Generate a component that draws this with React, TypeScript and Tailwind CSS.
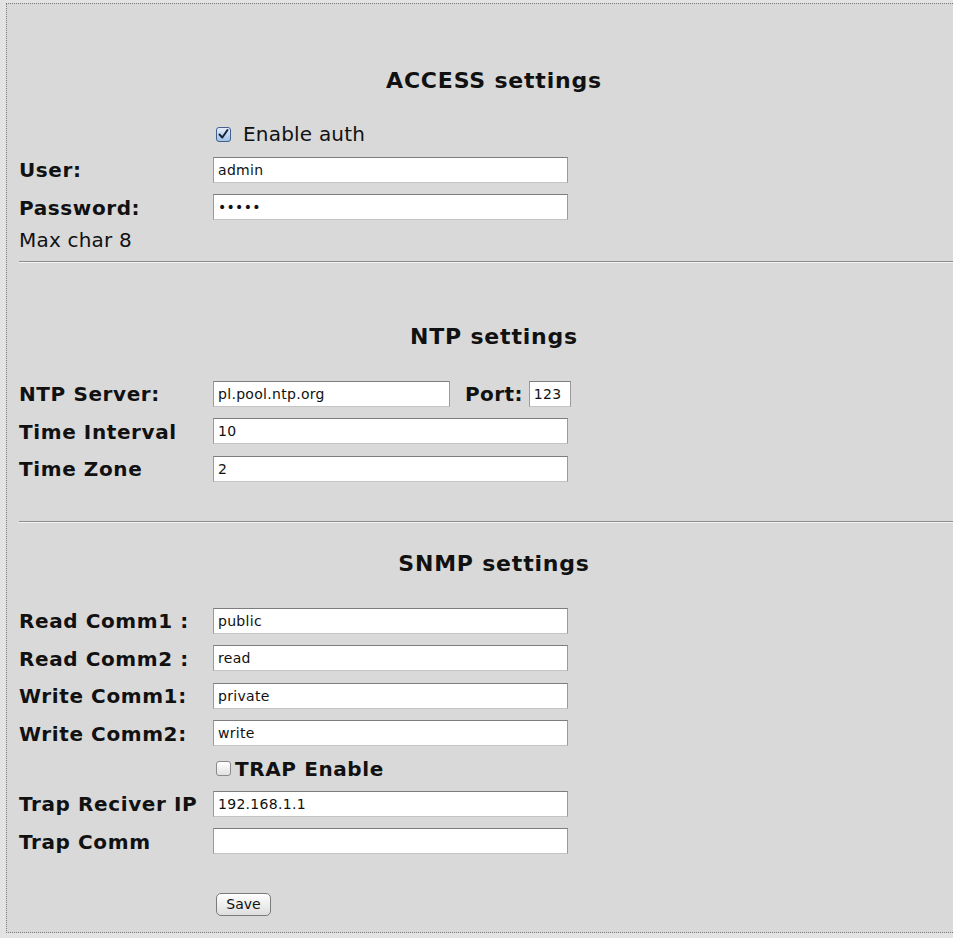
import React from "react";

const font = { fontFamily: '"DejaVu Sans", Verdana, sans-serif' };

function TextBox({ value, w = "w-[355px]" }: { value: string; w?: string }) {
  return (
    <div
      className={`${w} h-[26px] bg-white border border-[#9a9a9a] border-t-[#7d7d7d] border-b-[#c4c4c4] flex items-center pl-[4px] pt-[1px] text-[14px] tracking-[0.3px] text-[#111] overflow-hidden whitespace-nowrap`}
    >
      {value}
    </div>
  );
}

function Row({ label, children }: { label: string; children: React.ReactNode }) {
  return (
    <div className="flex items-center h-[37.5px]">
      <div className="w-[194px] pt-[1px] text-[20px] tracking-[0.6px] font-bold text-[#111] whitespace-nowrap">{label}</div>
      {children}
    </div>
  );
}

function Heading({ children }: { children: React.ReactNode }) {
  return (
    <h2 className="h-[26px] leading-[26px] text-center text-[22px] tracking-[0.8px] font-bold text-[#111]">
      {children}
    </h2>
  );
}

function Divider() {
  return <div className="ml-[12px] h-0 border-t border-t-[#8c8c8c] border-b border-b-[#f4f4f4]" />;
}

export default function App() {
  return (
    <div className="w-[953px] h-[938px] overflow-hidden bg-[#e3e3e3]" style={font}>
      <div className="w-[975px] ml-[6px] mt-[3px] border-l border-t border-b border-dotted border-[#7a7a7a] bg-[#d9d9d9]">
        {/* ACCESS */}
        <div className="pt-[64px]">
          <Heading>ACCESS settings</Heading>
          <div className="mt-[23px] h-[34px] flex items-center pl-[209px]">
            <svg width="15" height="15" viewBox="0 0 15 15" className="mr-[12px]">
              <defs>
                <linearGradient id="cb" x1="0" y1="0" x2="0" y2="1">
                  <stop offset="0" stopColor="#e4eefb" />
                  <stop offset="1" stopColor="#9fbfe6" />
                </linearGradient>
              </defs>
              <rect x="0.5" y="0.5" width="14" height="14" rx="2.5" fill="url(#cb)" stroke="#41628f" />
              <path d="M3.5 7.5 L6.3 10.5 L11.5 3" fill="none" stroke="#15243a" strokeWidth="2" strokeLinecap="round" strokeLinejoin="round" />
            </svg>
            <span className="text-[20px] tracking-[0.2px] text-[#111]">Enable auth</span>
          </div>
          <div className="pl-[12px]">
            <Row label="User:">
              <TextBox value="admin" />
            </Row>
            <Row label="Password:">
              <TextBox value="•••••" />
            </Row>
            <div className="h-[26px] flex items-center pt-[1px] text-[20px] tracking-[0.2px] text-[#111]">Max char 8</div>
          </div>
          <div className="h-[9px]" />
          <Divider />
        </div>

        {/* NTP */}
        <div className="pt-[61px]">
          <Heading>NTP settings</Heading>
          <div className="pl-[12px] mt-[25px]">
            <Row label="NTP Server:">
              <TextBox value="pl.pool.ntp.org" w="w-[237px]" />
              <span className="ml-[15px] mr-[6px] pt-[1px] text-[20px] tracking-[0.4px] font-bold text-[#111]">Port:</span>
              <TextBox value="123" w="w-[42px]" />
            </Row>
            <Row label="Time Interval">
              <TextBox value="10" />
            </Row>
            <Row label="Time Zone">
              <TextBox value="2" />
            </Row>
          </div>
          <div className="h-[33.5px]" />
          <Divider />
        </div>

        {/* SNMP */}
        <div className="pt-[28px] pb-[16px]">
          <Heading>SNMP settings</Heading>
          <div className="pl-[12px] mt-[24.75px]">
            <Row label="Read Comm1 :">
              <TextBox value="public" />
            </Row>
            <Row label="Read Comm2 :">
              <TextBox value="read" />
            </Row>
            <Row label="Write Comm1:">
              <TextBox value="private" />
            </Row>
            <Row label="Write Comm2:">
              <TextBox value="write" />
            </Row>
            <div className="h-[33px] flex items-center pl-[197px]">
              <span className="w-[15px] h-[15px] rounded-[3px] border border-[#8a8a8a] bg-gradient-to-b from-white to-[#e2e2e2] mr-[4px]" />
              <span className="pt-[1px] text-[20px] tracking-[0.6px] font-bold text-[#111]">TRAP Enable</span>
            </div>
            <Row label="Trap Reciver IP">
              <TextBox value="192.168.1.1" />
            </Row>
            <Row label="Trap Comm">
              <TextBox value="" />
            </Row>
            <div className="mt-[32px] pl-[197px]">
              <button className="w-[55px] h-[23px] rounded-[5px] border border-[#7b7b7b] bg-gradient-to-b from-white to-[#dedede] text-[14px] text-[#111]">
                Save
              </button>
            </div>
          </div>
        </div>
      </div>
    </div>
  );
}
